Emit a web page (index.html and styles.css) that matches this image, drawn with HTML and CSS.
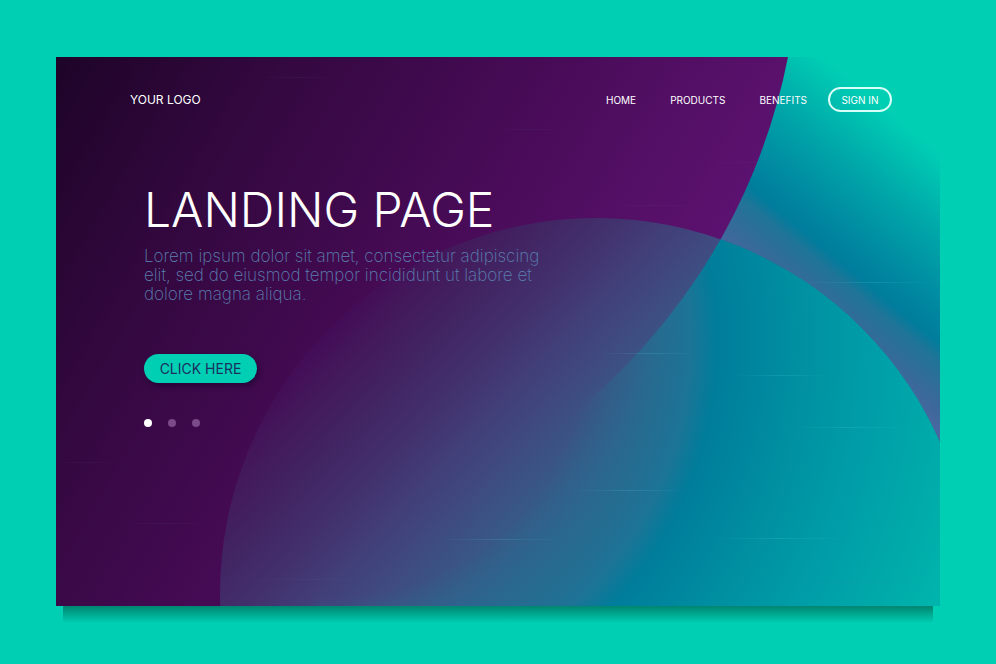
FILE: index.html
```html
<!DOCTYPE html>
<html lang="en">
<head>
<meta charset="utf-8">
<meta name="viewport" content="width=device-width, initial-scale=1">
<title>Landing Page</title>
<link rel="stylesheet" href="styles.css">
</head>
<body>
<div class="card">
  <svg class="backdrop" viewBox="0 0 884 549" preserveAspectRatio="none" aria-hidden="true">
    <defs>
      <linearGradient id="sky" gradientUnits="userSpaceOnUse" x1="658" y1="189" x2="795" y2="23">
        <stop offset="0" stop-color="#4867a0"/>
        <stop offset=".12" stop-color="#366a99"/>
        <stop offset=".25" stop-color="#207498"/>
        <stop offset=".32" stop-color="#007d9c"/>
        <stop offset=".42" stop-color="#0086a0"/>
        <stop offset=".7" stop-color="#00a6a9"/>
        <stop offset="1" stop-color="#00cfb4"/>
      </linearGradient>
      <linearGradient id="plum" gradientUnits="userSpaceOnUse" x1="0" y1="0" x2="575" y2="336">
        <stop offset="0" stop-color="#1e0428"/>
        <stop offset=".3" stop-color="#340840"/>
        <stop offset=".63" stop-color="#470b56"/>
        <stop offset="1" stop-color="#5c1270"/>
      </linearGradient>
      <linearGradient id="disc" gradientUnits="userSpaceOnUse" x1="253" y1="296" x2="485" y2="514">
        <stop offset="0" stop-color="#440d57"/>
        <stop offset=".12" stop-color="#431a5c"/>
        <stop offset=".25" stop-color="#422463"/>
        <stop offset=".4" stop-color="#42306c"/>
        <stop offset=".54" stop-color="#423e78"/>
        <stop offset=".68" stop-color="#3f4b80"/>
        <stop offset=".84" stop-color="#375988"/>
        <stop offset="1" stop-color="#2b678f"/>
      </linearGradient>
      <radialGradient id="sea" gradientUnits="userSpaceOnUse" cx="274" cy="283" r="680">
        <stop offset=".38" stop-color="#2c668e" stop-opacity="0"/>
        <stop offset=".42" stop-color="#2c668e" stop-opacity=".5"/>
        <stop offset=".47" stop-color="#276b90" stop-opacity=".9"/>
        <stop offset=".53" stop-color="#1c7496"/>
        <stop offset=".57" stop-color="#007d9b"/>
        <stop offset=".7" stop-color="#0091a2"/>
        <stop offset=".8" stop-color="#009ea8"/>
        <stop offset=".93" stop-color="#00aeaa"/>
        <stop offset="1" stop-color="#00b8b0"/>
      </radialGradient>
      <linearGradient id="streak">
        <stop offset="0" stop-color="#4fd0d8" stop-opacity="0"/>
        <stop offset=".5" stop-color="#4fd0d8" stop-opacity=".2"/>
        <stop offset="1" stop-color="#4fd0d8" stop-opacity="0"/>
      </linearGradient>
      <linearGradient id="faint">
        <stop offset="0" stop-color="#5070a0" stop-opacity="0"/>
        <stop offset=".5" stop-color="#5070a0" stop-opacity=".1"/>
        <stop offset="1" stop-color="#5070a0" stop-opacity="0"/>
      </linearGradient>
      <clipPath id="disc-clip"><circle cx="540" cy="537" r="376"/></clipPath>
    </defs>
    <rect width="884" height="549" fill="url(#sky)"/>
    <path fill="url(#plum)" d="M0 0H732A610 610 0 0 1 479 385L344 549H0Z"/>
    <g clip-path="url(#disc-clip)">
      <rect width="884" height="549" fill="url(#disc)"/>
      <path fill="url(#sea)" d="M732 0A610 610 0 0 1 479 385L254 549H884V0Z"/>
    </g>
    <g fill="url(#streak)">
      <rect x="544" y="296" width="95" height="1"/>
      <rect x="679" y="318" width="95" height="1"/>
      <rect x="744" y="225" width="140" height="1"/>
      <rect x="734" y="370" width="120" height="1"/>
      <rect x="514" y="433" width="120" height="1"/>
      <rect x="384" y="482" width="120" height="1"/>
      <rect x="654" y="481" width="140" height="1"/>
    </g>
    <g fill="url(#faint)">
      <rect x="644" y="105" width="150" height="1"/>
      <rect x="164" y="522" width="180" height="1"/>
      <rect x="0" y="405" width="60" height="1"/>
      <rect x="64" y="466" width="90" height="1"/>
      <rect x="714" y="525" width="170" height="1"/>
      <rect x="434" y="72" width="80" height="1"/>
      <rect x="554" y="148" width="90" height="1"/>
      <rect x="204" y="20" width="80" height="1"/>
    </g>
  </svg>

  <header class="topbar">
    <a class="logo" href="#">YOUR LOGO</a>
    <nav class="nav">
      <a class="nav-link" href="#">HOME</a>
      <a class="nav-link" href="#">PRODUCTS</a>
      <a class="nav-link" href="#">BENEFITS</a>
    </nav>
    <button class="sign-in" type="button">SIGN IN</button>
  </header>

  <main class="hero">
    <h1 class="title">LANDING PAGE</h1>
    <p class="lead">Lorem ipsum dolor sit amet, consectetur adipiscing<br>elit, sed do eiusmod tempor incididunt ut labore et<br>dolore magna aliqua.</p>
    <button class="cta" type="button">CLICK HERE</button>
    <div class="dots">
      <button class="dot dot-active" type="button" aria-label="Slide 1"></button>
      <button class="dot" type="button" aria-label="Slide 2"></button>
      <button class="dot" type="button" aria-label="Slide 3"></button>
    </div>
  </main>
</div>
</body>
</html>
```
FILE: styles.css
```css
* {
  box-sizing: border-box;
}

body {
  margin: 0;
  min-height: 100vh;
  padding: 57px 56px 58px;
  display: flex;
  background: #00cfb4;
  color: #fff;
  font-family: Inter, "Liberation Sans", sans-serif;
}

.card {
  position: relative;
  flex: 1;
}

.card::after {
  content: "";
  position: absolute;
  top: 100%;
  left: 7px;
  right: 7px;
  height: 17px;
  background: linear-gradient(#008570, #00cfb4);
}

.backdrop {
  position: absolute;
  inset: 0;
  width: 100%;
  height: 100%;
}

.topbar {
  position: relative;
  display: flex;
  align-items: center;
  padding: 30px 48px 0 74px;
}

.logo {
  margin-right: auto;
  color: #fff;
  font-size: 12px;
  text-decoration: none;
}

.nav {
  display: flex;
  gap: 34px;
  margin-right: 21px;
}

.nav-link {
  color: #fff;
  font-size: 10px;
  text-decoration: none;
}

.sign-in {
  width: 64px;
  height: 25px;
  padding: 0;
  border: 2px solid #d8fff8;
  border-radius: 13px;
  background: transparent;
  color: #fff;
  font: 10px Inter, sans-serif;
}

.hero {
  position: relative;
  padding: 70px 88px 0;
}

.title {
  margin: 0;
  font-size: 48px;
  font-weight: 300;
  line-height: 56px;
}

.lead {
  margin: 9px 0 0;
  color: #5a80b0;
  font-size: 17px;
  font-weight: 200;
  line-height: 19px;
}

.cta {
  display: block;
  width: 113px;
  height: 29px;
  margin-top: 50px;
  padding: 0;
  border: 0;
  border-radius: 15px;
  background: #00cfb4;
  box-shadow: 2px 3px 5px rgba(20, 0, 40, .5);
  color: #1c3060;
  font: 14px Inter, sans-serif;
}

.dots {
  display: flex;
  gap: 16px;
  margin-top: 36px;
}

.dot {
  width: 8px;
  height: 8px;
  padding: 0;
  border: 0;
  border-radius: 50%;
  background: #7b4a88;
}

.dot-active {
  background: #fff;
}
```
